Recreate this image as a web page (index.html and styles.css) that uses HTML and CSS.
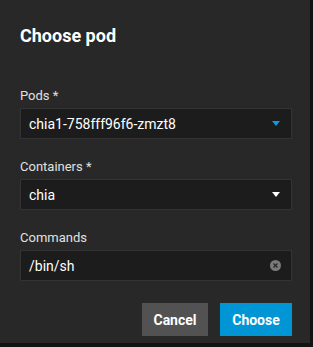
FILE: index.html
```html
<!DOCTYPE html>
<html lang="en">
<head>
    <meta charset="UTF-8">
    <meta name="viewport" content="width=device-width, initial-scale=1.0">
    <title>Choose pod</title>
    <link rel="stylesheet" href="styles.css">
</head>
<body>

<div class="dialog">
    <h1>Choose pod</h1>

    <!-- Fields -->
    <div class="field first">
        <label>Pods *</label>
        <div class="box">
            <span class="value">chia1-758fff96f6-zmzt8</span>
            <span class="arrow blue"></span>
        </div>
    </div>
    <div class="field">
        <label>Containers *</label>
        <div class="box">
            <span class="value">chia</span>
            <span class="arrow"></span>
        </div>
    </div>
    <div class="field">
        <label>Commands</label>
        <div class="box">
            <span class="value">/bin/sh</span>
            <svg class="clear" width="11" height="11" viewBox="0 0 11 11">
                <circle cx="5.5" cy="5.5" r="5.5" fill="#7a7a7a"/>
                <path d="M3.5 3.5 L7.5 7.5 M7.5 3.5 L3.5 7.5" stroke="#2a2a2a" stroke-width="1.4"/>
            </svg>
        </div>
    </div>

    <!-- Actions -->
    <div class="actions">
        <button class="btn cancel">Cancel</button>
        <button class="btn choose">Choose</button>
    </div>
</div>

</body>
</html>
```

FILE: styles.css
```css
body {
    margin: 0;
    background-color: #121212;
    font-family: Roboto, "Liberation Sans", sans-serif;
}
.dialog {
    width: 310px;
    height: 343px;
    box-sizing: border-box;
    background-color: #282828;
    padding: 24px 18px 0 20px;
}
h1 {
    margin: 0;
    font-size: 18px;
    line-height: 24px;
    font-weight: 700;
    color: #fff;
}
.field {
    margin-top: 20px;
}
.field.first {
    margin-top: 40px;
}
.field label {
    display: block;
    font-size: 13px;
    line-height: 16px;
    color: #e0e0e0;
    margin-bottom: 4px;
}
.box {
    height: 31px;
    box-sizing: border-box;
    background-color: #1c1c1c;
    border: 1px solid #333;
    display: flex;
    align-items: center;
    padding: 0 10px 0 8px;
}
.value {
    flex: 1;
    font-size: 14px;
    color: #fff;
}
.arrow {
    width: 0;
    height: 0;
    border-left: 4px solid transparent;
    border-right: 4px solid transparent;
    border-top: 5px solid #fff;
    margin-right: 1px;
}
.arrow.blue {
    border-top-color: #0a9be0;
}
.actions {
    margin-top: 22px;
    display: flex;
    justify-content: flex-end;
    gap: 12px;
}
.btn {
    height: 33px;
    border: none;
    font-family: Roboto, "Liberation Sans", sans-serif;
    font-size: 14px;
    font-weight: 700;
    color: #fff;
    cursor: pointer;
}
.cancel {
    width: 66px;
    background-color: #525252;
}
.choose {
    width: 72px;
    background-color: #0095d5;
}
```
